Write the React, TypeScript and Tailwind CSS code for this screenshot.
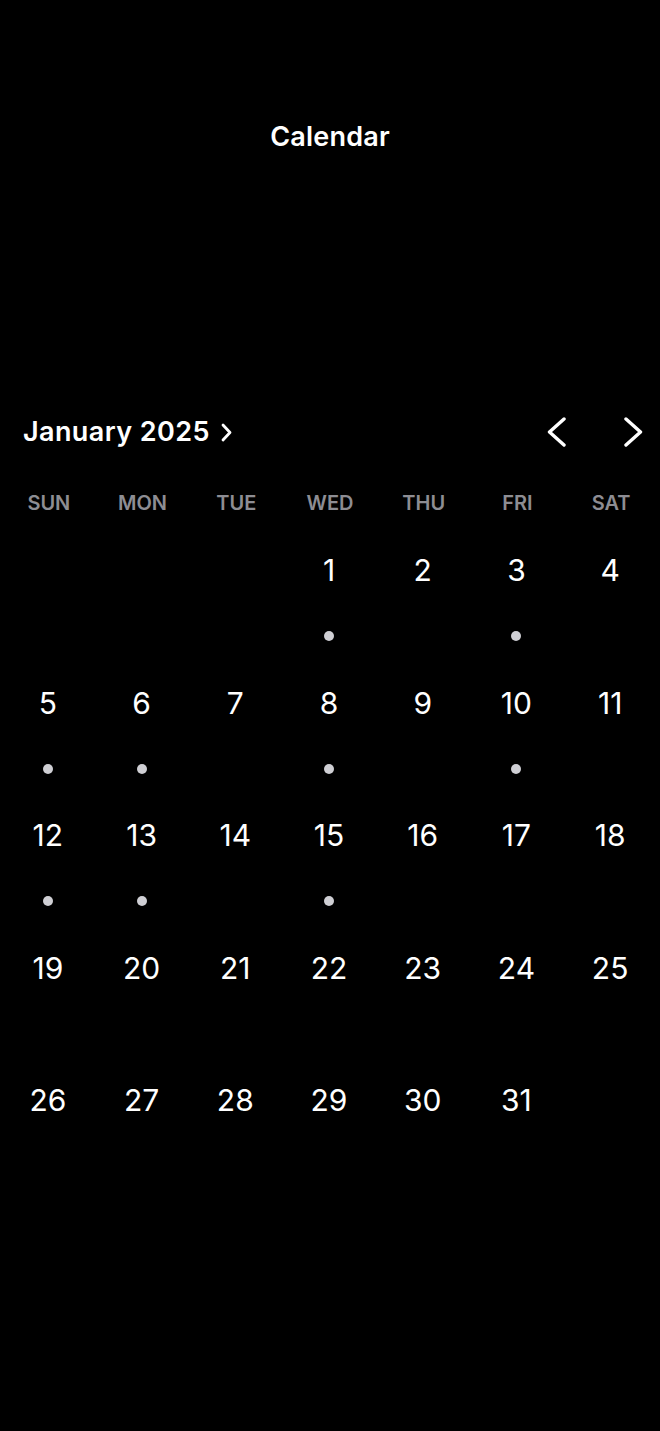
import React from "react";

const dotted = [1, 3, 5, 6, 8, 10, 12, 13, 15];
const weekdays = ["SUN", "MON", "TUE", "WED", "THU", "FRI", "SAT"];

function Chevron({ dir, className }: { dir: "left" | "right"; className?: string }) {
    return (
        <svg viewBox="0 0 20 30" className={className} fill="none" stroke="currentColor" strokeWidth={3.4} strokeLinecap="round" strokeLinejoin="round">
            {dir === "left" ? <polyline points="17,2 2.5,15 17,28" /> : <polyline points="3,2 17.5,15 3,28" />}
        </svg>
    );
}

export default function App() {
    // January 2025 starts on a Wednesday
    const cells: (number | null)[] = [null, null, null];
    for (let d = 1; d <= 31; d++) cells.push(d);

    return (
        <div className="min-h-screen bg-black text-white font-['Inter',sans-serif]">
            {/* Title */}
            <div className="pt-[120px] h-[154px] text-center text-[27px] leading-[34px] font-semibold tracking-[0.2px]">
                Calendar
            </div>

            {/* Month header */}
            <div className="mt-[256px] h-[44px] flex items-center justify-between pl-[23px] pr-[17px]">
                <div className="flex items-center gap-[11px]">
                    <span className="text-[27px] font-semibold tracking-[0.4px]">January 2025</span>
                    <svg viewBox="0 0 11 19" className="w-[11px] h-[19px]" fill="none" stroke="currentColor" strokeWidth={2.8} strokeLinecap="round" strokeLinejoin="round">
                        <polyline points="2,2 9,9.5 2,17" />
                    </svg>
                </div>
                <div className="flex items-center gap-[56px]">
                    <Chevron dir="left" className="w-[20px] h-[30px]" />
                    <Chevron dir="right" className="w-[20px] h-[30px]" />
                </div>
            </div>

            {/* Weekdays */}
            <div className="mt-[37px] grid grid-cols-7 px-[2px]">
                {weekdays.map((w) => (
                    <div key={w} className="text-center text-[20px] leading-[24px] font-semibold text-[#8d8d93]">
                        {w}
                    </div>
                ))}
            </div>

            {/* Days */}
            <div className="mt-[37px] grid grid-cols-7 pl-[1px] pr-[3px]">
                {cells.map((d, i) => (
                    <div key={i} className="h-[132.5px] flex flex-col items-center">
                        {d && (
                            <>
                                <span className="text-[30px] leading-[36px] font-normal">{d}</span>
                                {dotted.includes(d) && <span className="mt-[43px] w-[10px] h-[10px] rounded-full bg-[#cfcfd4]" />}
                            </>
                        )}
                    </div>
                ))}
            </div>
        </div>
    );
}
